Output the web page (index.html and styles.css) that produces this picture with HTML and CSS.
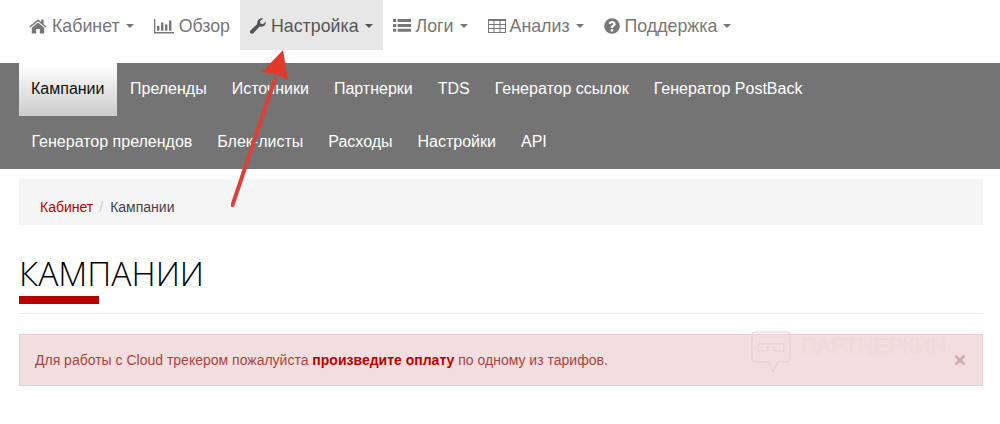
FILE: index.html
```html
<!DOCTYPE html>
<html lang="en">
<head>
    <meta charset="UTF-8">
    <title>Кампании</title>
    <link rel="stylesheet" href="styles.css">
</head>
<body>
    <ul class="topnav">
        <li><a href="#"><svg class="ico" viewBox="0 0 18 16"><path d="M9 1.2 L0.4 8.4 L1.4 9.6 L9 3.3 L16.6 9.6 L17.6 8.4 L14.6 5.9 V1.5 H12.3 V4 Z M9 4.6 L2.8 9.7 V15.4 H7.2 V10.9 H10.8 V15.4 H15.2 V9.7 Z"/></svg>Кабинет<b class="caret"></b></a></li>
        <li><a href="#"><svg class="ico" viewBox="0 0 20 16"><path d="M0 1 H1.3 V14 H20 V15.4 H0 Z M3 8 H5.4 V12.8 H3 Z M7 4.5 H9.4 V12.8 H7 Z M11 6.5 H13.4 V12.8 H11 Z M15 2.5 H17.4 V12.8 H15 Z"/></svg>Обзор</a></li>
        <li class="open"><a href="#"><svg class="ico" viewBox="0 0 16 16"><path d="M15.7 3.6 C16.2 6 14.6 8.6 11.8 8.8 C11 8.9 10.4 8.7 9.8 8.5 L3.6 14.9 C2.6 16 1 15.9 0.3 14.9 C-0.3 14 -0.1 13 0.6 12.2 L7.3 6.1 C6.8 3.6 8.2 0.9 11 0.3 C11.8 0.1 12.6 0.2 13.2 0.4 L9.9 3.2 L10.6 5.6 L12.9 6.3 Z"/></svg>Настройка<b class="caret"></b></a></li>
        <li><a href="#"><svg class="ico" viewBox="0 0 18 16"><path d="M0 1 H3.2 V4 H0 Z M4.6 1 H18 V4 H4.6 Z M0 5.9 H3.2 V8.9 H0 Z M4.6 5.9 H18 V8.9 H4.6 Z M0 10.8 H3.2 V13.8 H0 Z M4.6 10.8 H18 V13.8 H4.6 Z"/></svg>Логи<b class="caret"></b></a></li>
        <li><a href="#"><svg class="ico ico-table" viewBox="0 0 18 16"><path fill-rule="evenodd" d="M0 1 H18 V15 H0 Z M1 3 V6 H5.5 V3 Z M6.5 3 V6 H11.5 V3 Z M12.5 3 V6 H17 V3 Z M1 7 V10 H5.5 V7 Z M6.5 7 V10 H11.5 V7 Z M12.5 7 V10 H17 V7 Z M1 11 V14 H5.5 V11 Z M6.5 11 V14 H11.5 V11 Z M12.5 11 V14 H17 V11 Z"/></svg>Анализ<b class="caret"></b></a></li>
        <li><a href="#"><svg class="ico" viewBox="0 0 16 16"><path fill-rule="evenodd" d="M8 0.2 A7.8 7.8 0 1 0 8 15.8 A7.8 7.8 0 1 0 8 0.2 Z M6.8 11.2 H9.2 V13.4 H6.8 Z M4.6 5.6 C4.9 3.9 6.3 2.9 8.1 2.9 C10 2.9 11.6 4.1 11.6 5.9 C11.6 7.2 10.8 7.9 10 8.4 C9.4 8.8 9.2 9 9.2 9.9 H6.8 C6.8 8.4 7.3 7.7 8.2 7.2 C8.8 6.8 9.1 6.6 9.1 6 C9.1 5.4 8.6 5 8 5 C7.4 5 7 5.4 6.7 6.2 Z"/></svg>Поддержка<b class="caret"></b></a></li>
    </ul>

    <ul class="subnav">
        <li class="current"><a href="#">Кампании</a></li>
        <li><a href="#">Преленды</a></li>
        <li><a href="#">Источники</a></li>
        <li><a href="#">Партнерки</a></li>
        <li><a href="#">TDS</a></li>
        <li><a href="#">Генератор ссылок</a></li>
        <li><a href="#">Генератор PostBack</a></li>
        <li><a href="#">Генератор прелендов</a></li>
        <li><a href="#">Блек-листы</a></li>
        <li><a href="#">Расходы</a></li>
        <li><a href="#">Настройки</a></li>
        <li><a href="#">API</a></li>
    </ul>

    <div class="content">
        <div class="breadcrumb">
            <a href="#">Кабинет</a><span class="sep">/</span><span>Кампании</span>
        </div>

        <div class="page-title">
            <h1>Кампании</h1>
        </div>

        <div class="alert">
            <span>Для работы с Cloud трекером пожалуйста <a href="#">произведите оплату</a> по одному из тарифов.</span>
            <span class="close">×</span>
        </div>
    </div>

    <!-- стрелка поверх скриншота -->
    <svg class="arrow" width="100" height="170" viewBox="0 0 100 170">
        <path d="M1.5 160 L44 34" stroke="#d9423a" stroke-width="4" stroke-linecap="round" fill="none"/>
        <path d="M52 5 L57 35 L45 29 L31 27 Z" fill="#e2392f"/>
    </svg>

    <!-- водяной знак -->
    <div class="mark">
        <svg width="40" height="44" viewBox="0 0 40 44" fill="none" stroke="#e6cdcf" stroke-width="1">
            <path d="M4 1 H36 Q39 1 39 4 V28 Q39 31 36 31 H27 L22 41 L18 31 H4 Q1 31 1 28 V4 Q1 1 4 1 Z"/>
            <path d="M7 13 H33 M7 13 V20 H17 V15 M23 15 V20 H33 V13"/>
        </svg>
        <span>ПАРТНЕРКИН</span>
    </div>
</body>
</html>
```

FILE: styles.css
```css
*{
    margin: 0;
    padding: 0;
    box-sizing: border-box;
}
body{
    position: relative;
    font-family: "Liberation Sans", Arial, sans-serif;
    background: #fff;
    color: #333;
    overflow: hidden;
}
a{
    text-decoration: none;
}
ul{
    list-style: none;
}

.topnav{
    display: flex;
    padding-left: 19px;
    margin-bottom: 13px;
}
.topnav a{
    display: flex;
    align-items: center;
    height: 50px;
    padding: 2px 10px 0;
    font-size: 17.8px;
    color: #777;
}
.topnav .open a{
    background: #e7e7e7;
    color: #555;
}
.ico{
    height: 16px;
    width: auto;
    margin-right: 5px;
    fill: currentColor;
}
.ico-table{
    margin-right: 4px;
}
.caret{
    width: 0;
    height: 0;
    margin-left: 6px;
    border-top: 4px solid;
    border-left: 4px solid transparent;
    border-right: 4px solid transparent;
}

.subnav{
    display: flex;
    flex-wrap: wrap;
    padding: 0 100px 0 19px;
    background: #747474;
}
.subnav li{
    height: 53px;
}
.subnav a{
    display: block;
    height: 53px;
    padding: 0 12.5px;
    line-height: 52px;
    font-size: 16px;
    color: #fff;
}
.subnav .current a{
    padding: 0 12px;
    margin-right: 1px;
    background: linear-gradient(to bottom, #fff, #ccc);
    color: #111;
}

.content{
    padding: 10px 17px 0 19px;
}
.breadcrumb{
    height: 46px;
    padding: 20px 21px 0;
    background: #f5f5f5;
    font-size: 14px;
    line-height: 17px;
    color: #444;
}
.breadcrumb a{
    color: #b00;
}
.sep{
    padding: 0 7px 0 6px;
    color: #ccc;
}

.page-title{
    height: 89px;
    padding-top: 29px;
    border-bottom: 1px solid #eee;
    margin-bottom: 20px;
}
.page-title h1{
    position: relative;
    font-family: "Open Sans", "Liberation Sans", sans-serif;
    font-size: 33.6px;
    line-height: 38px;
    font-weight: 300;
    text-transform: uppercase;
    color: #000;
    height: 50px;
}
.page-title h1::after{
    content: "";
    position: absolute;
    left: 0;
    bottom: 0;
    width: 80px;
    height: 8px;
    background: #b90000;
}

.alert{
    display: flex;
    justify-content: space-between;
    align-items: center;
    height: 52px;
    padding: 0 16px 0 15px;
    background: #f2dede;
    border: 1px solid #ebccd1;
    font-size: 14px;
    color: #a94442;
}
.alert a{
    color: #b00;
    font-weight: bold;
}
.close{
    font-size: 21px;
    font-weight: bold;
    color: #cfa9ab;
}

.arrow{
    position: absolute;
    left: 231px;
    top: 45px;
}
.mark{
    position: absolute;
    left: 751px;
    top: 331px;
    display: flex;
    gap: 10px;
    pointer-events: none;
}
.mark span{
    font-size: 21.7px;
    line-height: 30px;
    color: transparent;
    -webkit-text-stroke: 0.25px #e6cdd0;
}
```
